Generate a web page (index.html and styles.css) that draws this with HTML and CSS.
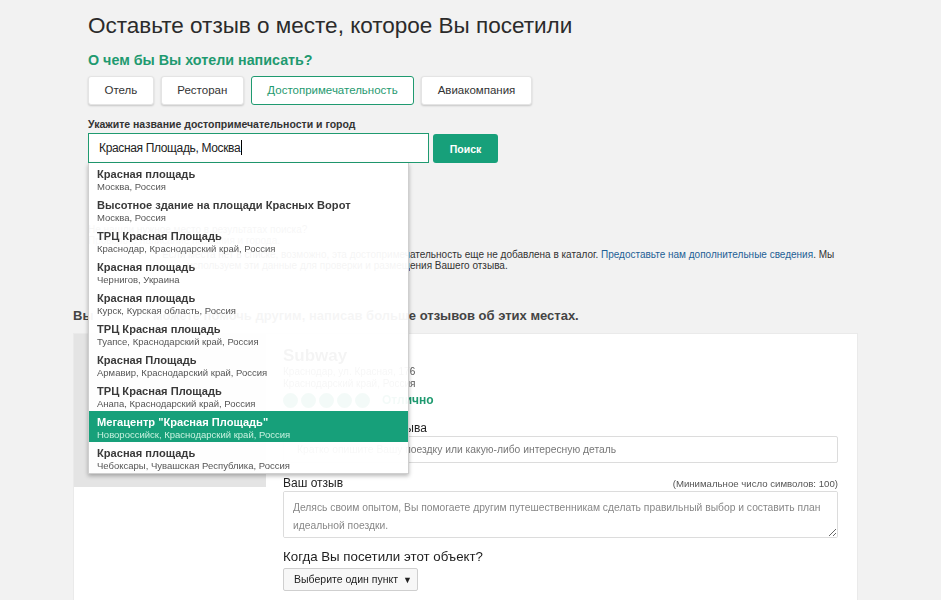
FILE: index.html
```html
<!DOCTYPE html>
<html lang="ru">
<head>
<meta charset="utf-8">
<title>Оставьте отзыв</title>
<link rel="stylesheet" href="styles.css">
</head>
<body>
<div class="wrap">
  <section class="top">
    <h1 class="title">Оставьте отзыв о месте, которое Вы посетили</h1>
    <h2 class="subtitle">О чем бы Вы хотели написать?</h2>
    <div class="tabs">
      <div class="tab">Отель</div>
      <div class="tab">Ресторан</div>
      <div class="tab active">Достопримечательность</div>
      <div class="tab">Авиакомпания</div>
    </div>
    <div class="field-label">Укажите название достопримечательности и город</div>
    <div class="search-row">
      <div class="search-box">
        <div class="search-input">Красная Площадь, Москва<span class="caret"></span></div>
        <ul class="suggest">
          <li class="item"><div class="item-title">Красная площадь</div><div class="item-sub">Москва, Россия</div></li>
          <li class="item"><div class="item-title">Высотное здание на площади Красных Ворот</div><div class="item-sub">Москва, Россия</div></li>
          <li class="item"><div class="item-title">ТРЦ Красная Площадь</div><div class="item-sub">Краснодар, Краснодарский край, Россия</div></li>
          <li class="item"><div class="item-title">Красная площадь</div><div class="item-sub">Чернигов, Украина</div></li>
          <li class="item"><div class="item-title">Красная площадь</div><div class="item-sub">Курск, Курская область, Россия</div></li>
          <li class="item"><div class="item-title">ТРЦ Красная площадь</div><div class="item-sub">Туапсе, Краснодарский край, Россия</div></li>
          <li class="item"><div class="item-title">Красная Площадь</div><div class="item-sub">Армавир, Краснодарский край, Россия</div></li>
          <li class="item"><div class="item-title">ТРЦ Красная Площадь</div><div class="item-sub">Анапа, Краснодарский край, Россия</div></li>
          <li class="item selected"><div class="item-title">Мегацентр "Красная Площадь"</div><div class="item-sub">Новороссийск, Краснодарский край, Россия</div></li>
          <li class="item"><div class="item-title">Красная площадь</div><div class="item-sub">Чебоксары, Чувашская Республика, Россия</div></li>
        </ul>
      </div>
      <button class="search-btn">Поиск</button>
    </div>
    <div class="hint">
      <div class="hint-head">Не нашли нужное место в результатах поиска?</div>
      <div class="hint-line">Проверьте написание названия и города.</div>
      <div class="hint-row"><span class="covered">Если места нет в списке, возможно, эта достопримеч</span><span>ательность еще не добавлена в каталог. <a href="#" class="link">Предоставьте нам дополнительные сведения</a>. Мы</span></div>
      <div class="hint-row"><span class="covered">используем эти данные для проверки и размещ</span><span>ения Вашего отзыва.</span></div>
    </div>
  </section>

  <h3 class="more"><span class="more-head"><span>Вы</span><span class="covered-b">можете помочь другим, написав боль</span></span><span>ше отзывов об этих местах.</span></h3>

  <div class="card">
    <div class="photo"></div>
    <div class="form">
      <div class="place-name">Subway</div>
      <div class="place-addr">Краснодар, ул. Красная, 176</div>
      <div class="place-addr">Краснодарский край, Россия</div>
      <div class="rating">
        <span class="dot"></span><span class="dot"></span><span class="dot"></span><span class="dot"></span><span class="dot"></span>
        <span class="rating-text">Отлично</span>
      </div>
      <div class="label">Заголовок Вашего отзыва</div>
      <div class="text-input">Кратко опишите Вашу поездку или какую-либо интересную деталь</div>
      <div class="label-row">
        <span class="label plain">Ваш отзыв</span>
        <span class="min">(Минимальное число символов: 100)</span>
      </div>
      <textarea class="textarea" placeholder="Делясь своим опытом, Вы помогаете другим путешественникам сделать правильный выбор и составить план идеальной поездки."></textarea>
      <div class="when">Когда Вы посетили этот объект?</div>
      <div class="select">Выберите один пункт <span class="arrow">▼</span></div>
    </div>
  </div>
</div>
</body>
</html>
```

FILE: styles.css
```css
* { box-sizing: border-box; }

body {
  margin: 0;
  background: #f2f2f2;
  font-family: "Liberation Sans", Arial, sans-serif;
  color: #333;
}

.wrap {
  padding-left: 73px;
  width: 858px;
}

.top {
  padding-left: 15px;
}

.title {
  margin: 12px 0 0;
  font-size: 22.5px;
  line-height: 28px;
  font-weight: normal;
  color: #2b2b2b;
}

.subtitle {
  margin: 11px 0 0;
  font-size: 14.3px;
  line-height: 18px;
  font-weight: bold;
  color: #1f9a70;
}

.tabs {
  display: flex;
  gap: 7px;
  margin-top: 7px;
}

.tab {
  height: 29px;
  line-height: 27px;
  padding: 0 15.5px;
  background: #fff;
  border: 1px solid #e4e4e4;
  border-radius: 3px;
  box-shadow: 0 1px 2px rgba(0,0,0,0.18);
  font-size: 11.5px;
  color: #333;
}

.tab.active {
  border-color: #1f9a70;
  color: #1f9a70;
  box-shadow: none;
}

.field-label {
  margin-top: 12px;
  font-size: 10.5px;
  line-height: 14px;
  font-weight: bold;
  color: #333;
}

.search-row {
  display: flex;
  gap: 4px;
  margin-top: 2px;
}

.search-box {
  position: relative;
}

.search-input {
  width: 341px;
  height: 30px;
  border: 1px solid #1f9a70;
  background: #fff;
  font-size: 12px;
  letter-spacing: -0.35px;
  line-height: 28px;
  padding-left: 10px;
  color: #222;
}

.caret {
  display: inline-block;
  width: 1px;
  height: 15px;
  margin-left: 1px;
  background: #000;
  vertical-align: -3px;
}

.search-btn {
  width: 65px;
  height: 29px;
  margin-top: 1px;
  border: none;
  border-radius: 3px;
  background: #17a07a;
  color: #fff;
  font-family: "Liberation Sans", Arial, sans-serif;
  font-size: 10.5px;
  font-weight: bold;
}

.suggest {
  position: absolute;
  left: 0;
  top: 30px;
  z-index: 5;
  width: 321px;
  margin: 0;
  padding: 0;
  list-style: none;
  background: rgba(255,255,255,0.95);
  border: 1px solid #cfcfcf;
  border-top: none;
  box-shadow: 0 2px 4px rgba(0,0,0,0.28);
}

.item {
  height: 31px;
  padding: 4px 8px 0;
}

.item-title {
  font-size: 11.1px;
  line-height: 14px;
  font-weight: bold;
  color: #3a3a3a;
}

.item-sub {
  font-size: 9.5px;
  line-height: 11px;
  color: #555;
}

.item.selected {
  background: #17a07a;
}

.item.selected .item-title {
  color: #fff;
}

.item.selected .item-sub {
  color: #c9f2e0;
}

.hint {
  margin-top: 61px;
  font-size: 10px;
  color: #333;
  white-space: nowrap;
}

.hint-head {
  line-height: 11px;
  color: #555;
}

.hint-line {
  line-height: 11px;
  color: #777;
}

.hint-row {
  display: flex;
  line-height: 11px;
}

.hint-line + .hint-row {
  margin-top: 3px;
}

.covered {
  flex: none;
  width: 322px;
  text-align: right;
  overflow: hidden;
}

.link {
  color: #1d5f95;
  text-decoration: none;
}

.more {
  display: flex;
  margin: 37px 0 0;
  font-size: 13px;
  line-height: 16px;
  font-weight: bold;
  color: #444;
  white-space: nowrap;
}

.more-head {
  display: flex;
  justify-content: space-between;
  flex: none;
  width: 325px;
  overflow: hidden;
}

.card {
  display: flex;
  margin-top: 9px;
  width: 785px;
  min-height: 300px;
  background: #fff;
  border: 1px solid #eaeaea;
}

.photo {
  width: 192px;
  height: 153px;
  background: #e4e4e4;
  flex: none;
}

.form {
  flex: 1;
  padding: 11px 19px 0 17px;
}

.place-name {
  font-size: 17px;
  line-height: 21px;
  font-weight: bold;
  color: #333;
}

.place-addr {
  font-size: 10px;
  line-height: 12px;
  color: #555;
}

.rating {
  display: flex;
  align-items: center;
  gap: 3px;
  height: 20px;
}

.dot {
  width: 15px;
  height: 15px;
  border-radius: 50%;
  border: 2px solid #1f9a70;
  background: #1f9a70;
}

.rating-text {
  margin-left: 9px;
  font-size: 12px;
  font-weight: bold;
  color: #1f9a70;
}

.label {
  margin-top: 10px;
  font-size: 12px;
  line-height: 16px;
  color: #222;
}

.text-input {
  height: 27px;
  border: 1px solid #dcdcdc;
  border-radius: 2px;
  padding-left: 13px;
  font-size: 10.3px;
  line-height: 25px;
  color: #777;
  background: #fff;
}

.label-row {
  display: flex;
  justify-content: space-between;
  align-items: center;
  height: 16px;
  margin-top: 12px;
}

.label.plain {
  margin-top: 0;
}

.min {
  font-size: 9.65px;
  color: #555;
}

.textarea {
  display: block;
  width: 100%;
  height: 47px;
  margin: 0;
  padding: 7px 9px;
  border: 1px solid #dcdcdc;
  border-radius: 2px;
  font-family: "Liberation Sans", Arial, sans-serif;
  font-size: 10.3px;
  line-height: 18px;
  color: #777;
  resize: vertical;
}

.textarea::placeholder {
  color: #888;
}

.when {
  margin-top: 10px;
  font-size: 13.3px;
  line-height: 18px;
  color: #1e1e1e;
}

.select {
  display: inline-block;
  margin-top: 2px;
  height: 23px;
  padding: 0 5px 0 10px;
  border: 1px solid #cfcfcf;
  border-radius: 2px;
  background: #f7f7f7;
  font-size: 10.5px;
  line-height: 21px;
  color: #222;
}

.arrow {
  font-size: 9px;
  margin-left: 2px;
}
```
